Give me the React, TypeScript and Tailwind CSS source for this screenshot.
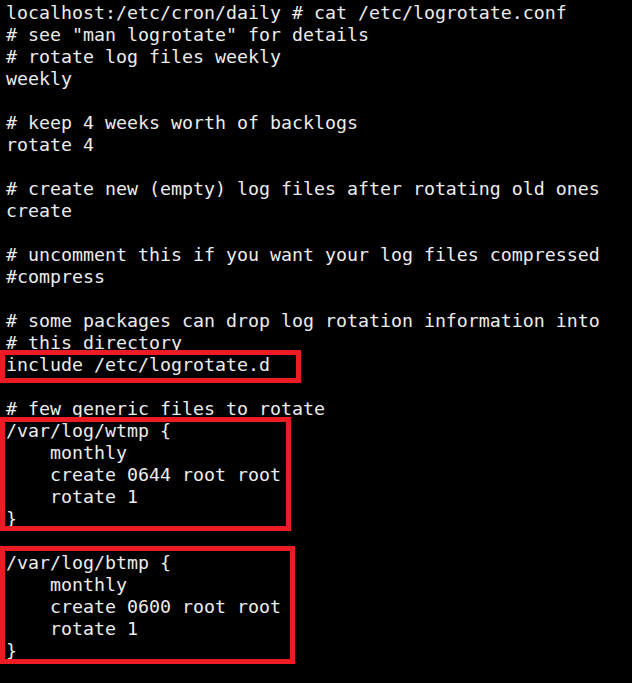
const lines = [
  "localhost:/etc/cron/daily # cat /etc/logrotate.conf",
  '# see "man logrotate" for details',
  "# rotate log files weekly",
  "weekly",
  "",
  "# keep 4 weeks worth of backlogs",
  "rotate 4",
  "",
  "# create new (empty) log files after rotating old ones",
  "create",
  "",
  "# uncomment this if you want your log files compressed",
  "#compress",
  "",
  "# some packages can drop log rotation information into",
  "# this directory",
  "include /etc/logrotate.d",
  "",
  "# few generic files to rotate",
  "/var/log/wtmp {",
  "    monthly",
  "    create 0644 root root",
  "    rotate 1",
  "}",
  "",
  "/var/log/btmp {",
  "    monthly",
  "    create 0600 root root",
  "    rotate 1",
  "}",
];

export default function App() {
  return (
    <div className="relative w-[632px] h-[683px] bg-black overflow-hidden">
      <pre
        className="pt-[2px] pl-[6px] text-[18.27px] leading-[22px] text-[#ececec] whitespace-pre"
        style={{ fontFamily: '"DejaVu Sans Mono", monospace' }}
      >
        {lines.map((line, i) => (
          <div key={i} className="h-[22px]">
            {line}
          </div>
        ))}
      </pre>

      {/* annotation boxes */}
      <div className="absolute left-0 top-[350px] w-[301px] h-[33px] border-[5px] border-[#ed1c24]" />
      <div className="absolute left-0 top-[417px] w-[291px] h-[114px] border-[5px] border-[#ed1c24]" />
      <div className="absolute left-0 top-[546px] w-[295px] h-[118px] border-[5px] border-[#ed1c24]" />
    </div>
  );
}
